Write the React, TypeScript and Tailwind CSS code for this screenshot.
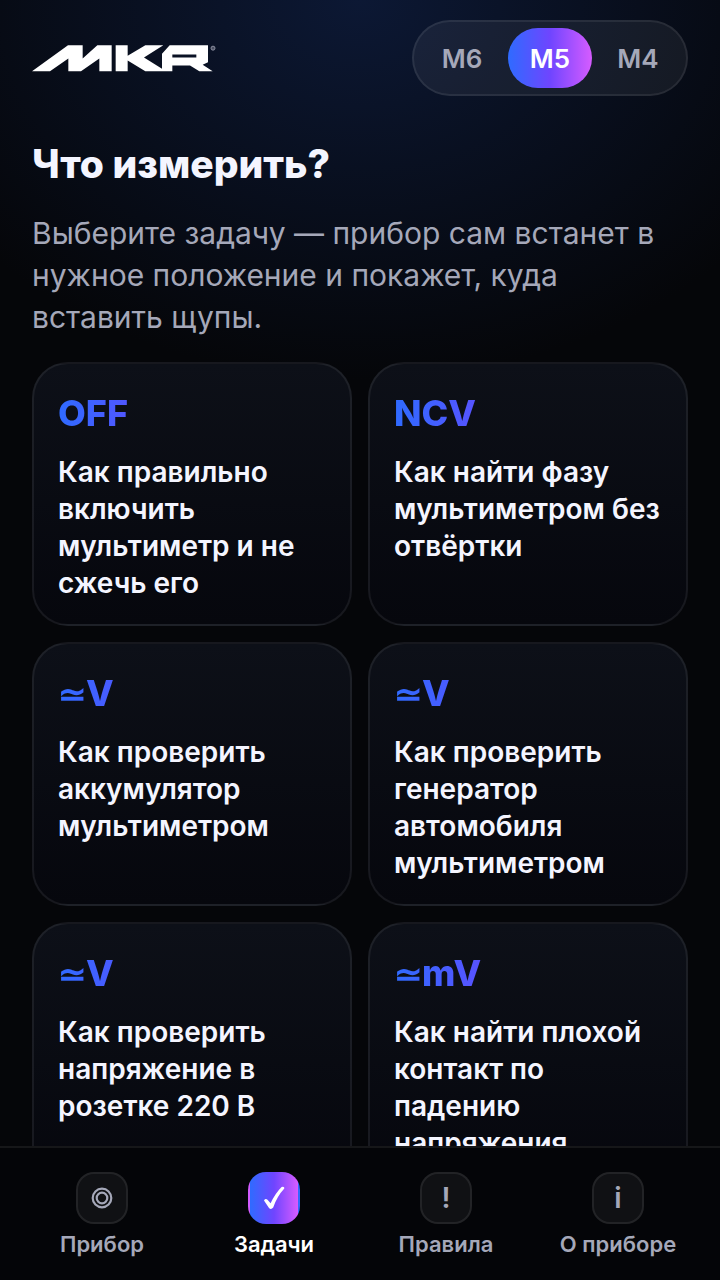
import { useState } from 'react';

type Tab = 'device' | 'tasks' | 'rules' | 'about';

interface Task {
  id: string;
  // AC/DC sign shown before the mode name
  sign?: string;
  mode: string;
  title: string;
}

const models = ['M6', 'M5', 'M4'];

const tasks: Task[] = [
  { id: 'power', mode: 'OFF', title: 'Как правильно включить мультиметр и не сжечь его' },
  { id: 'phase', mode: 'NCV', title: 'Как найти фазу мультиметром без отвёртки' },
  { id: 'battery', sign: '≃', mode: 'V', title: 'Как проверить аккумулятор мультиметром' },
  { id: 'generator', sign: '≃', mode: 'V', title: 'Как проверить генератор автомобиля мультиметром' },
  { id: 'socket', sign: '≃', mode: 'V', title: 'Как проверить напряжение в розетке 220 В' },
  { id: 'contact', sign: '≃', mode: 'mV', title: 'Как найти плохой контакт по падению напряжения' },
];

const tabs: { id: Tab; label: string }[] = [
  { id: 'device', label: 'Прибор' },
  { id: 'tasks', label: 'Задачи' },
  { id: 'rules', label: 'Правила' },
  { id: 'about', label: 'О приборе' },
];

function Logo() {
  return (
    <svg viewBox="0 0 552 80" className="w-[184px] h-[27px]" fill="#fff" role="img" aria-label="MKR">
      <path d="M0 78 L108 0 H152 V40 L196 0 H239 V78 H202 V40 L147 78 H109 V40 L54 78 Z" />
      <path d="M251 0 H287 V32 L340 0 H394 L336 37 L390 71 V26 L413 0 H528 V51 L512 59 L542 78 H502 L474 61 H421 V78 H340 L287 46 V78 H251 Z M421 28 V37 H493 V28 Z" fillRule="evenodd" />
      <circle cx="543" cy="9" r="6" fill="#4a4f62" stroke="#8b8fa0" strokeWidth="3" />
    </svg>
  );
}

function TabIcon({ tab }: { tab: Tab }) {
  switch (tab) {
    case 'device':
      return (
        <svg viewBox="0 0 24 24" className="w-6 h-6" fill="none" stroke="currentColor" strokeWidth="2.200">
          <circle cx="12" cy="12" r="9.300" />
          <circle cx="12" cy="12" r="5.300" />
        </svg>
      );
    case 'tasks':
      return (
        <svg viewBox="0 0 24 24" className="w-6 h-6" fill="currentColor">
          <path d="M2 14.500 Q3.500 12 5.500 13.800 L8.600 17.200 Q13 7.500 19.600 .9 Q22.800 .1 22.300 2.600 Q15 10.500 11.200 21.600 Q9 24 7 22 Z" />
        </svg>
      );
    case 'rules':
      return <span>!</span>;
    default:
      return <span>i</span>;
  }
}

function App() {
  const [model, setModel] = useState('M5');
  const [activeTab, setActiveTab] = useState<Tab>('tasks');

  return (
    <div className="min-h-screen bg-[#050609] bg-[radial-gradient(ellipse_500px_380px_at_50%_0%,#0c1834_0%,#050609_100%)] bg-no-repeat font-[Inter,sans-serif] text-[#f4f5ff]">
      {/* Header */}
      <header className="flex items-center justify-between px-8 pt-5">
        <Logo />
        <div className="flex gap-1 rounded-full border-2 border-white/8 bg-white/6 p-[6px]">
          {models.map(item => (
            <button
              key={item}
              type="button"
              onClick={() => setModel(item)}
              className={`h-[60px] w-[84px] rounded-full text-[26px] font-semibold ${item === model ? 'bg-[linear-gradient(90deg,#2f6bff,#6f45ff_50%,#d65cff)] text-white' : 'text-[#a5a8b9]'}`}
            >
              {item}
            </button>
          ))}
        </div>
      </header>

      {/* Task list */}
      <main className="px-8 pt-11 pb-[150px]">
        <h1 className="text-[39px] leading-[48px] font-extrabold">Что измерить?</h1>
        <p className="mt-6 text-[30px] leading-[42px] text-[#a5a8b9]">
          Выберите задачу — прибор сам встанет в нужное положение и покажет, куда вставить щупы.
        </p>

        <div className="mt-6 grid grid-cols-2 gap-4">
          {tasks.map(task => (
            <button
              key={task.id}
              type="button"
              className="flex flex-col rounded-[36px] border-2 border-white/7 bg-linear-to-b from-[#0d1018] to-[#06070d] px-6 pt-6 pb-[22px] text-left"
            >
              <span className="w-full bg-[linear-gradient(90deg,#2f6bff,#6f45ff_50%,#d65cff)] bg-clip-text text-[36px] leading-[50px] font-extrabold text-transparent">
                {task.sign && <span className="text-[34px] leading-none font-bold">{task.sign}</span>}
                {task.mode}
              </span>
              <span className="mt-4 text-[28px] leading-[37px] font-semibold">{task.title}</span>
            </button>
          ))}
        </div>
      </main>

      {/* Bottom navigation */}
      <nav className="fixed inset-x-0 bottom-0 grid grid-cols-4 border-t-2 border-white/7 bg-[#040508] px-4 pt-6 pb-[22px]">
        {tabs.map(({ id, label }) => (
          <button
            key={id}
            type="button"
            onClick={() => setActiveTab(id)}
            className={`flex flex-col items-center gap-[6px] text-[22px] leading-7 font-semibold ${id === activeTab ? 'text-white' : 'text-[#a5a8b9]'}`}
          >
            <span
              className={`flex h-[52px] w-[52px] items-center justify-center rounded-[18px] border-2 text-[28px] ${id === activeTab ? 'border-transparent bg-[linear-gradient(90deg,#2f6bff,#6f45ff_50%,#d65cff)]' : 'border-white/8 bg-white/5'}`}
            >
              <TabIcon tab={id} />
            </span>
            {label}
          </button>
        ))}
      </nav>
    </div>
  );
}

export default App;
